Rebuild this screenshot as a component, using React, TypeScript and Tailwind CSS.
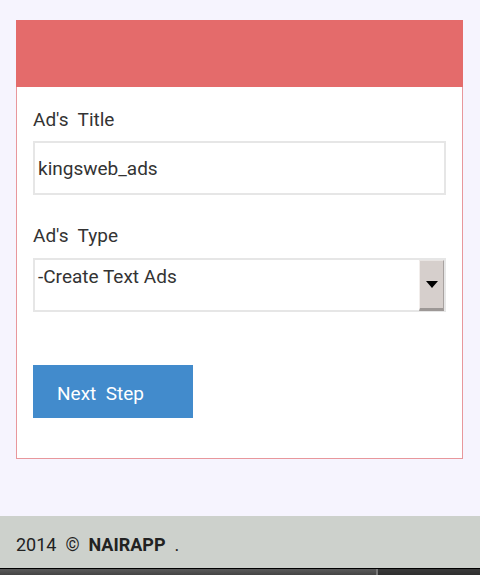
const font = { fontFamily: "Roboto, 'Noto Sans', sans-serif" };

const App = () => {
  return (
    <div className="w-[480px] h-[575px] bg-[#f6f4fe] flex flex-col overflow-hidden" style={font}>
      {/* Card */}
      <div className="ml-4 mt-5 w-[447px] border border-t-0 border-[#e8979c] bg-white">
        <div className="h-[67px] bg-[#e46b6b] -mx-px"></div>

        <div className="px-4 pt-[21px] pb-[40px]">
          <label className="block whitespace-pre text-[19px] leading-6 text-[#333]">Ad's  Title</label>
          <div className="mt-[9px] h-[54px] border-2 border-[#e6e6e6] flex items-center pl-[3px] pt-[3px] text-[19px] text-[#333]">
            kingsweb_ads
          </div>

          <label className="mt-[29px] block whitespace-pre text-[19px] leading-6 text-[#333]">Ad's  Type</label>
          <div className="mt-[10px] h-[54px] border-2 border-[#e6e6e6] flex">
            <div className="flex-1 pl-[3px] pt-[5px] text-[19px] leading-6 text-[#333]">-Create Text Ads</div>
            <div className="w-[25px] h-[51px] bg-[#d6cfcc] border-l border-t border-l-[#f2eeec] border-t-[#e8e4e2] border-r border-r-[#a8a2a0] border-b-[3px] border-b-[#9d9896] flex items-center justify-center">
              <svg width="12" height="7" viewBox="0 0 12 7">
                <path d="M0 0h12L6 7z" fill="#000" />
              </svg>
            </div>
          </div>

          <button className="mt-[53px] w-[160px] h-[53px] bg-[#428bcc] text-white text-[19px] text-left pl-6 pt-[5px] whitespace-pre">
            Next  Step
          </button>
        </div>
      </div>

      {/* Footer */}
      <div className="mt-[57px] h-[52px] bg-[#cdd1cc] flex items-center pl-4 pt-1 text-[18px] text-[#222] whitespace-pre">
        2014  ©  <span className="font-bold">NAIRAPP</span>  .
      </div>

      <div className="flex-1 border-t border-black flex">
        <div className="w-[376px] bg-gradient-to-b from-[#5a5a5a] to-[#444]"></div>
        <div className="flex-1 bg-gradient-to-b from-[#3a3a3a] to-[#2e2e2e] border-l-2 border-[#777]"></div>
      </div>
    </div>
  );
};

export default App;
